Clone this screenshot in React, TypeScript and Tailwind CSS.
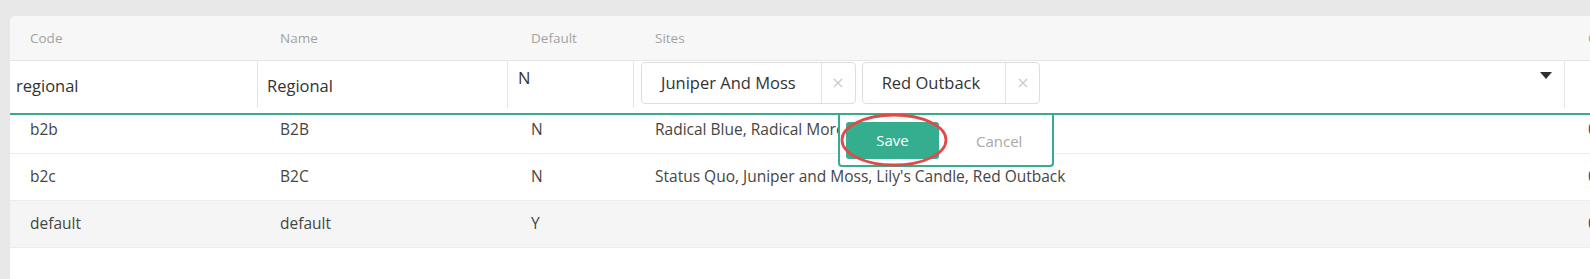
import React from 'react';

const rows = [
  { code: 'b2b', name: 'B2B', def: 'N', sites: 'Radical Blue, Radical Moreno', created: '0' },
  { code: 'b2c', name: 'B2C', def: 'N', sites: "Status Quo, Juniper and Moss, Lily's Candle, Red Outback", created: '0' },
  { code: 'default', name: 'default', def: 'Y', sites: '', created: '0' },
];

const cols = 'grid grid-cols-[250px_251px_124px_933px_1fr]';

function Chip({ label }: { label: string }) {
  return (
    <div className="flex h-[42px] rounded-[4px] border border-[#dedede] bg-white">
      <span className="flex items-center pl-[19px] pr-[25px] text-[16.5px] text-[#333]">{label}</span>
      <span className="flex w-[34px] items-center justify-center border-l border-[#e3e3e3]">
        <svg width="10" height="10" viewBox="0 0 10 10">
          <path d="M1 1L9 9M9 1L1 9" stroke="#c8c8c8" strokeWidth="1.2" />
        </svg>
      </span>
    </div>
  );
}

export default function App() {
  return (
    <div
      className="h-[279px] w-[1590px] overflow-hidden bg-[#e8e8e8] pl-[10px] pt-4"
      style={{ fontFamily: '"Open Sans", "Liberation Sans", sans-serif' }}
    >
      <div className="relative h-full w-[1640px] rounded-tl-[6px] bg-white">
        {/* header */}
        <div className={`${cols} h-[45px] items-center rounded-tl-[6px] border-b border-[#e6e6e6] bg-[#f7f7f7] text-[13.5px] text-[#a3a3a3]`}>
          <div className="pl-5">Code</div>
          <div className="pl-5">Name</div>
          <div className="pl-5">Default</div>
          <div className="pl-5">Sites</div>
          <div className="pl-5">C</div>
        </div>

        {/* the regional row sits under the inline editor */}
        <div className="h-[46px]" />

        {rows.map((r) => (
          <div
            key={r.code}
            className={`${cols} h-[47px] items-center whitespace-nowrap border-b border-[#ececec] text-[15.5px] text-[#454545] ${
              r.code === 'default' ? 'bg-[#f5f5f5]' : ''
            }`}
          >
            <div className="pl-5">{r.code}</div>
            <div className="pl-5">{r.name}</div>
            <div className="pl-5">{r.def}</div>
            <div className="overflow-hidden pl-5">{r.sites}</div>
            <div className="pl-5">{r.created}</div>
          </div>
        ))}

        {/* inline editor over the regional row */}
        <div className="absolute left-0 right-0 top-[45px] flex h-[54px] items-start border-b-2 border-[#37ab8d] bg-white text-[16.5px] text-[#333]">
          <div className="flex h-[47px] w-[248px] items-center border-r border-[#e6e6e6] pl-[6px] pt-[3px]">regional</div>
          <div className="flex h-[47px] w-[250px] items-center border-r border-[#e6e6e6] pl-[9px] pt-[3px]">Regional</div>
          <div className="h-[47px] w-[126px] border-r border-[#e6e6e6] pl-[10px] pt-[5px]">N</div>
          <div className="flex h-[47px] w-[931px] items-start border-r border-[#e6e6e6] pl-[7px] pr-[12px] pt-[1px]">
            <div className="flex gap-[6px]">
              <Chip label="Juniper And Moss" />
              <Chip label="Red Outback" />
            </div>
            <svg className="ml-auto mt-[10px]" width="12" height="8" viewBox="0 0 12 8">
              <path d="M0 0H12L6 7Z" fill="#2f2f2f" />
            </svg>
          </div>
        </div>

        {/* save / cancel popover */}
        <div className="absolute left-[828px] top-[99px] flex h-[52px] w-[216px] items-start rounded-b-[4px] border-x-2 border-b-2 border-[#37ab8d] bg-white pl-[6px] pt-[7px]">
          <button className="h-[37px] w-[93px] rounded-[3px] bg-[#35ad8f] text-[15px] font-medium text-white">Save</button>
          <button className="ml-[37px] mt-[8px] text-[15px] text-[#a8a8a8]">Cancel</button>
        </div>

        {/* red annotation ring */}
        <svg className="pointer-events-none absolute left-[830px] top-[97px]" width="108" height="54" viewBox="0 0 108 54">
          <ellipse cx="54" cy="27" rx="52" ry="25" fill="none" stroke="#e24a4a" strokeWidth="2.8" />
        </svg>
      </div>
    </div>
  );
}
